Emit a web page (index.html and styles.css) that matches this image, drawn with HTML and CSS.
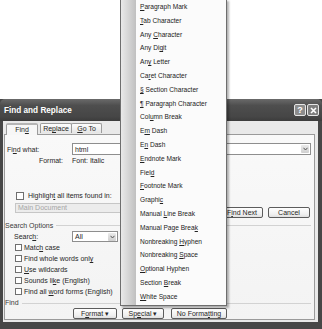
FILE: index.html
```html
<!DOCTYPE html>
<html lang="en">
  <head>
    <meta charset="utf-8" />
    <title>Find and Replace</title>
    <link rel="stylesheet" href="styles.css">
  </head>
  <body>
    <div class="desk">
      <!-- the dialog window -->
      <div class="dialog">
        <div class="titlebar">
          <span class="title">Find and Replace</span>
          <span class="tb-btn">?</span>
          <span class="tb-btn close">
            <svg width="7" height="7" viewBox="0 0 7 7"><path d="M1 1 L6 6 M6 1 L1 6" stroke="#fff" stroke-width="1.6"/></svg>
          </span>
        </div>
        <div class="frame">
          <div class="body">
            <div class="tabs">
              <span class="tab active">Fin<u>d</u></span>
              <span class="tab">Re<u>p</u>lace</span>
              <span class="tab"><u>G</u>o To</span>
            </div>
            <div class="panel">
              <div class="row find-row">
                <span class="lbl">Fi<u>n</u>d what:</span>
                <div class="combo">
                  <span class="val">html</span>
                  <span class="drop"><svg width="5" height="4" viewBox="0 0 5 4"><path d="M0.5 0.8 L2.5 3 L4.5 0.8" fill="none" stroke="#555" stroke-width="1"/></svg></span>
                </div>
              </div>
              <div class="row fmt-row">
                <span class="lbl right">Format:</span>
                <span>Font: Italic</span>
              </div>
              <div class="row check hl">
                <span class="box"></span><span>Highligh<u>t</u> all items found in:</span>
              </div>
              <div class="row sel-row">
                <div class="select off">Main Document</div>
                <div class="side-btns">
                  <span class="btn">F<u>i</u>nd Next</span>
                  <span class="btn">Cancel</span>
                </div>
              </div>
              <div class="group"><span>Search Options</span><span class="line"></span></div>
              <div class="row search-row">
                <span class="lbl ind">Searc<u>h</u>:</span>
                <div class="combo small">
                  <span class="val">All</span>
                  <span class="drop"><svg width="5" height="4" viewBox="0 0 5 4"><path d="M0.5 0.8 L2.5 3 L4.5 0.8" fill="none" stroke="#555" stroke-width="1"/></svg></span>
                </div>
              </div>
              <div class="row check"><span class="box"></span><span>Matc<u>h</u> case</span></div>
              <div class="row check"><span class="box"></span><span>Find whole words onl<u>y</u></span></div>
              <div class="row check"><span class="box"></span><span><u>U</u>se wildcards</span></div>
              <div class="row check"><span class="box"></span><span>Sounds li<u>k</u>e (English)</span></div>
              <div class="row check"><span class="box"></span><span>Find all <u>w</u>ord forms (English)</span></div>
              <div class="group find-group"><span>Find</span><span class="line"></span></div>
              <div class="row bottom-btns">
                <span class="btn fmt"><span>F<u>o</u>rmat &#9662;</span></span>
                <span class="btn spc"><span>Sp<u>e</u>cial &#9662;</span></span>
                <span class="btn nof"><span>No Forma<u>t</u>ting</span></span>
              </div>
            </div>
          </div>
        </div>
      </div>

      <!-- Special dropdown menu, lies over the dialog -->
      <div class="menu">
        <div class="item"><u>P</u>aragraph Mark</div>
        <div class="item"><u>T</u>ab Character</div>
        <div class="item">Any <u>C</u>haracter</div>
        <div class="item">Any Di<u>g</u>it</div>
        <div class="item">An<u>y</u> Letter</div>
        <div class="item">Ca<u>r</u>et Character</div>
        <div class="item"><u>§</u> Section Character</div>
        <div class="item"><u>¶</u> Paragraph Character</div>
        <div class="item">Col<u>u</u>mn Break</div>
        <div class="item">E<u>m</u> Dash</div>
        <div class="item">E<u>n</u> Dash</div>
        <div class="item"><u>E</u>ndnote Mark</div>
        <div class="item">Fiel<u>d</u></div>
        <div class="item"><u>F</u>ootnote Mark</div>
        <div class="item">Graphi<u>c</u></div>
        <div class="item">Manual <u>L</u>ine Break</div>
        <div class="item">Manual Page Brea<u>k</u></div>
        <div class="item">Nonbreaking <u>H</u>yphen</div>
        <div class="item">Nonbreaking <u>S</u>pace</div>
        <div class="item"><u>O</u>ptional Hyphen</div>
        <div class="item">Section <u>B</u>reak</div>
        <div class="item"><u>W</u>hite Space</div>
      </div>
    </div>
  </body>
</html>
```

FILE: styles.css
```css
body{
    margin: 0;
    background: #fff;
    font-family: "Liberation Sans", Arial, sans-serif;
    color: #262626;
}

.desk{
    position: relative;
    width: 322px;
    height: 329px;
    overflow: hidden;
    background: #fff;
}

u{
    text-decoration-thickness: 0.5px;
    text-underline-offset: 1px;
}

/* window */
.dialog{
    position: absolute;
    left: 0;
    top: 99px;
    width: 322px;
    height: 230px;
    display: flex;
    flex-direction: column;
    background: #474747;
}

.titlebar{
    height: 22px;
    display: flex;
    align-items: center;
    padding: 0 3px 0 4px;
    background: linear-gradient(#6a6a6a, #4e4e4e 30%, #464646 80%, #3c3c3c);
    border-radius: 5px 5px 0 0;
}

.title{
    flex: 1;
    color: #fff;
    font-size: 8.2px;
    font-weight: bold;
}

.tb-btn{
    width: 10px;
    height: 10px;
    margin-left: 1px;
    border: 1px solid #e6e6e6;
    border-radius: 2px;
    background: #8c8c8c;
    color: #fff;
    font-size: 9px;
    font-weight: bold;
    display: flex;
    align-items: center;
    justify-content: center;
}

.tb-btn.close{
    background: #7e7e7e;
}

.frame{
    flex: 1;
    display: flex;
    padding: 0 4px 7px 3px;
}

.body{
    flex: 1;
    display: flex;
    flex-direction: column;
    background: #e9e9e9;
    font-size: 7px;
}

/* tabs */
.tabs{
    display: flex;
    align-items: flex-end;
    height: 13px;
    padding-left: 3px;
    position: relative;
    z-index: 1;
}

.tab{
    box-sizing: border-box;
    width: 32px;
    height: 10px;
    margin-bottom: 1px;
    border: 1px solid #9c9c9c;
    border-bottom: none;
    border-radius: 2px 2px 0 0;
    background: linear-gradient(#fdfdfd, #e4e4e4);
    text-align: center;
    line-height: 9px;
}

.tab.active{
    height: 12px;
    margin-bottom: -1px;
    margin-right: 2px;
    background: #f7f7f7;
    border-top: 2px solid #b5b5b5;
    line-height: 10px;
}

.tab + .tab{
    margin-left: -1px;
}

.tab.active + .tab{
    margin-left: 0;
}

.tab:last-child{
    width: 31px;
}

.panel{
    flex: 1;
    margin: 0 3px 2px 1px;
    border: 1px solid #9a9a9a;
    background: linear-gradient(#f9f9f9, #f3f3f3);
    display: flex;
    flex-direction: column;
}

.row{
    display: flex;
    align-items: center;
}

.lbl{
    width: 67px;
    box-sizing: border-box;
    padding-left: 2px;
    flex: none;
}

.lbl.right{
    text-align: right;
    padding-right: 9px;
}

.lbl.ind{
    padding-left: 9px;
}

.find-row{
    margin-top: 8px;
    height: 12px;
}

.combo{
    flex: 1;
    box-sizing: border-box;
    height: 12px;
    margin-right: 3px;
    border: 1px solid #8e8e8e;
    background: #fff;
    display: flex;
    align-items: center;
    padding: 0 1px 0 2px;
}

.combo .val{
    flex: 1;
}

.combo.small{
    flex: none;
    width: 46px;
    height: 11px;
}

.drop{
    width: 8px;
    height: 8px;
    border-radius: 1px;
    background: linear-gradient(#eaeaea, #cfcfcf);
    display: flex;
    align-items: center;
    justify-content: center;
}

.fmt-row{
    height: 11px;
}

.check{
    height: 11px;
    padding-left: 10px;
}

.box{
    width: 7px;
    height: 7px;
    box-sizing: border-box;
    border: 1px solid #6f6f6f;
    background: #fff;
    margin-right: 2px;
    flex: none;
}

.hl{
    margin-top: 24px;
    padding-left: 11px;
}

.hl .box{
    width: 8px;
    height: 8px;
    margin-right: 4px;
}

.sel-row{
    margin-top: 2px;
    align-items: flex-start;
    height: 16px;
}

.select{
    width: 107px;
    height: 10px;
    box-sizing: border-box;
    margin-left: 10px;
    border: 1px solid #c6c6c6;
    background: #ececec;
    color: #a6a6a6;
    padding-left: 2px;
    line-height: 8px;
}

.side-btns{
    margin-left: auto;
    margin-right: 4px;
    margin-top: 4px;
    display: flex;
    gap: 5px;
}

.btn{
    box-sizing: border-box;
    width: 42px;
    height: 11px;
    border: 1px solid #5c5c5c;
    border-radius: 2px;
    background: linear-gradient(#fefefe, #efefef 70%, #e0e0e0);
    display: flex;
    align-items: center;
    justify-content: center;
    white-space: nowrap;
}

.group{
    display: flex;
    align-items: center;
    height: 10px;
    margin-top: 1px;
    color: #3a3a3a;
}

.group .line{
    flex: 1;
    height: 1px;
    margin: 1px 3px 0 3px;
    background: #d2d2d2;
}

.search-row{
    margin-top: 1px;
    height: 11px;
}

.find-group{
    height: 9px;
    margin-top: 1px;
}

.bottom-btns{
    margin-top: 1px;
    padding-left: 68px;
}

.btn.fmt{
    width: 44px;
}

.btn.spc{
    margin-left: 5px;
}

.btn.nof{
    width: 56px;
    margin-left: 7px;
}

/* the Special menu */
.menu{
    position: absolute;
    left: 120px;
    top: -1px;
    width: 107px;
    box-sizing: border-box;
    padding-bottom: 1px;
    border: 1px solid #6e6e6e;
    background: linear-gradient(to right, #e9e9e9, #c0c0c0 15px, #fbfbfb 15px);
    box-shadow: 2px 2px 2px rgba(0,0,0,0.3);
    font-size: 6.6px;
    color: #222;
}

.item{
    height: 13.8px;
    line-height: 13.8px;
    padding-left: 19px;
    white-space: nowrap;
}
```
